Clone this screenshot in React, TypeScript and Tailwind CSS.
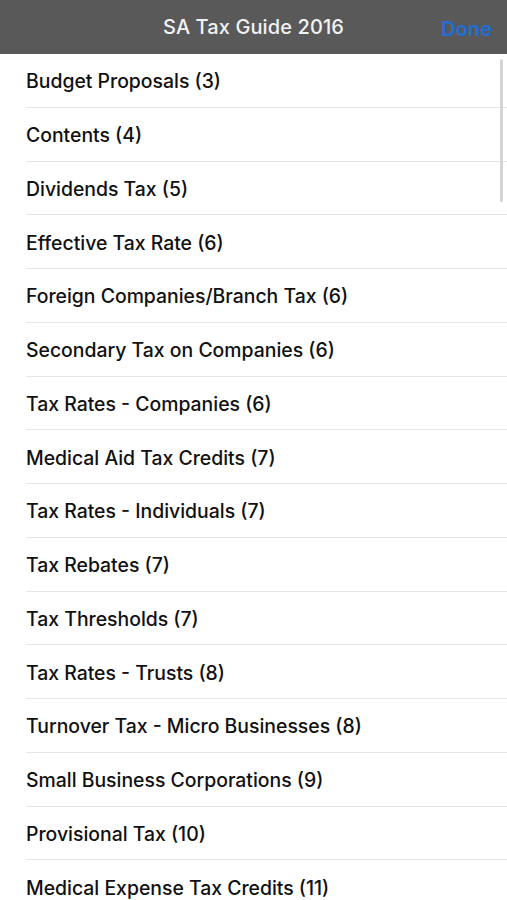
import React from "react";

const items = [
  "Budget Proposals (3)",
  "Contents (4)",
  "Dividends Tax (5)",
  "Effective Tax Rate (6)",
  "Foreign Companies/Branch Tax (6)",
  "Secondary Tax on Companies (6)",
  "Tax Rates - Companies (6)",
  "Medical Aid Tax Credits (7)",
  "Tax Rates - Individuals (7)",
  "Tax Rebates (7)",
  "Tax Thresholds (7)",
  "Tax Rates - Trusts (8)",
  "Turnover Tax - Micro Businesses (8)",
  "Small Business Corporations (9)",
  "Provisional Tax (10)",
  "Medical Expense Tax Credits (11)",
];

export default function App() {
  return (
    <div
      className="w-[507px] h-[900px] overflow-hidden bg-white flex flex-col relative"
      style={{ fontFamily: "Inter, 'Noto Sans', sans-serif" }}
    >
      <div className="h-[54px] shrink-0 bg-[#595959] flex items-center justify-center relative">
        <span className="text-[20px] font-medium text-[#f2f2f2] tracking-[0.1px]">SA Tax Guide 2016</span>
        <span className="absolute right-[15px] top-[14px] text-[20px] font-semibold text-[#1f6fd8]">Done</span>
      </div>
      <div className="flex-1 flex flex-col">
        {items.map((t) => (
          <div key={t} className="h-[53.75px] shrink-0 pl-[26px] flex flex-col">
            <div className="flex-1 flex items-center text-[19.4px] font-medium text-[#111] pt-[3px]">{t}</div>
            <div className="h-px bg-[#e6e6e6]" />
          </div>
        ))}
      </div>
      <div className="absolute right-[4px] top-[59px] w-[3px] h-[143px] rounded-full bg-[#d4d4d4]" />
    </div>
  );
}
